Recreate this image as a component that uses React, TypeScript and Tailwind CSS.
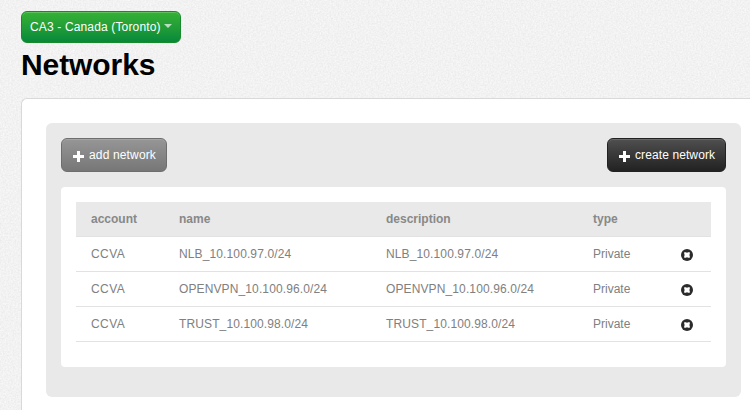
const rows = [
  { account: "CCVA", name: "NLB_10.100.97.0/24", type: "Private" },
  { account: "CCVA", name: "OPENVPN_10.100.96.0/24", type: "Private" },
  { account: "CCVA", name: "TRUST_10.100.98.0/24", type: "Private" },
];

function Plus() {
  return (
    <svg width="11" height="11" viewBox="0 0 11 11" className="mt-[3px] shrink-0" shapeRendering="crispEdges">
      <path d="M4 0h3v4h4v3H7v4H4V7H0V4h4z" fill="#fff" />
    </svg>
  );
}

function RemoveIcon() {
  return (
    <svg width="12" height="12" viewBox="0 0 12 12" className="block">
      <circle cx="6" cy="6" r="6" fill="#2b2b2b" />
      <path d="M3.2 3.2h2l.8.7.8-.7h2v2l-.7.8.7.8v2h-2L6 8.1l-.8.7h-2v-2l.7-.8-.7-.8z" fill="#fff" />
    </svg>
  );
}

// Fine paper grain behind the page content
function Grain() {
  return (
    <svg className="absolute inset-0 h-full w-full" aria-hidden="true">
      <filter id="grain" x="0" y="0" width="100%" height="100%" colorInterpolationFilters="sRGB">
        <feTurbulence type="fractalNoise" baseFrequency="0.6" numOctaves="3" seed="4" />
        <feColorMatrix values="0.08 0 0 0 0.908  0.08 0 0 0 0.908  0.08 0 0 0 0.908  0 0 0 0 1" />
      </filter>
      <rect width="100%" height="100%" filter="url(#grain)" />
    </svg>
  );
}

export default function App() {
  return (
    <div className="relative h-[410px] w-[750px] overflow-hidden bg-[#f2f2f2] font-['Liberation_Sans',Arial,sans-serif] text-xs text-[#808080]">
      <Grain />
      <div className="relative pl-[21px] pt-[11px]">
        <button className="flex h-8 w-40 items-center rounded-md border border-[#178a2c] bg-linear-to-b from-[#35b234] to-[#05893a] pl-2 text-xs tracking-[0.15px] text-white shadow-[inset_0_1px_0_rgba(255,255,255,0.2)]">
          <span className="whitespace-nowrap">CA3 - Canada (Toronto)</span>
          <span className="-mt-[3px] ml-[3px] border-x-4 border-t-4 border-x-transparent border-t-[#b9dfbf]" />
        </button>
        <h1 className="mt-1 h-[36px] text-[30px] font-bold leading-[36px] tracking-[-0.08px] text-black">Networks</h1>
        <main className="mt-[15px] h-[340px] rounded-tl-md border-l border-t border-[#d9d9d9] bg-white pl-6 pt-6">
          <section className="h-[274px] w-[695px] rounded-md bg-[#e9e9e9] p-[15px]">
            <div className="flex justify-between">
              <button className="flex h-[34px] w-[106px] items-center gap-[5px] rounded-md border border-[#6e6e6e] bg-linear-to-b from-[#969696] to-[#777777] pl-[11px] text-white shadow-[inset_0_1px_0_rgba(255,255,255,0.15)]">
                <Plus />
                <span className="whitespace-nowrap tracking-[0.15px]">add network</span>
              </button>
              <button className="flex h-[34px] w-[119px] items-center gap-[5px] rounded-md border border-[#222] bg-linear-to-b from-[#505050] to-[#222222] pl-[11px] text-white shadow-[inset_0_1px_0_rgba(255,255,255,0.15)]">
                <Plus />
                <span className="whitespace-nowrap tracking-[0.1px]">create network</span>
              </button>
            </div>
            <div className="mt-[15px] h-[180px] rounded-[4px] bg-white p-[15px]">
              <table className="w-full table-fixed border-separate border-spacing-0 text-left [&_td]:h-[35px] [&_td]:border-b [&_td]:border-[#e2e2e2] [&_th]:h-[35px] [&_th]:border-b [&_th]:border-[#e2e2e2]">
                <colgroup>
                  <col className="w-[88px]" />
                  <col className="w-[207px]" />
                  <col className="w-[207px]" />
                  <col className="w-[88px]" />
                  <col />
                </colgroup>
                <thead>
                  <tr className="bg-[#e9e9e9] text-[#888]">
                    <th className="p-0 pl-[15px]">account</th>
                    <th className="p-0 pl-[15px]">name</th>
                    <th className="p-0 pl-[15px]">description</th>
                    <th className="p-0 pl-[15px]">type</th>
                    <th className="p-0" />
                  </tr>
                </thead>
                <tbody>
                  {rows.map((row) => (
                    <tr key={row.name}>
                      <td className="p-0 pl-[15px] tracking-[0.4px]">{row.account}</td>
                      <td className="p-0 pl-[15px] tracking-[0.12px]">{row.name}</td>
                      <td className="p-0 pl-[15px] tracking-[0.12px]">{row.name}</td>
                      <td className="p-0 pl-[15px]">{row.type}</td>
                      <td className="p-0 pl-[15px] pt-[2px]"><RemoveIcon /></td>
                    </tr>
                  ))}
                </tbody>
              </table>
            </div>
          </section>
        </main>
      </div>
    </div>
  );
}
